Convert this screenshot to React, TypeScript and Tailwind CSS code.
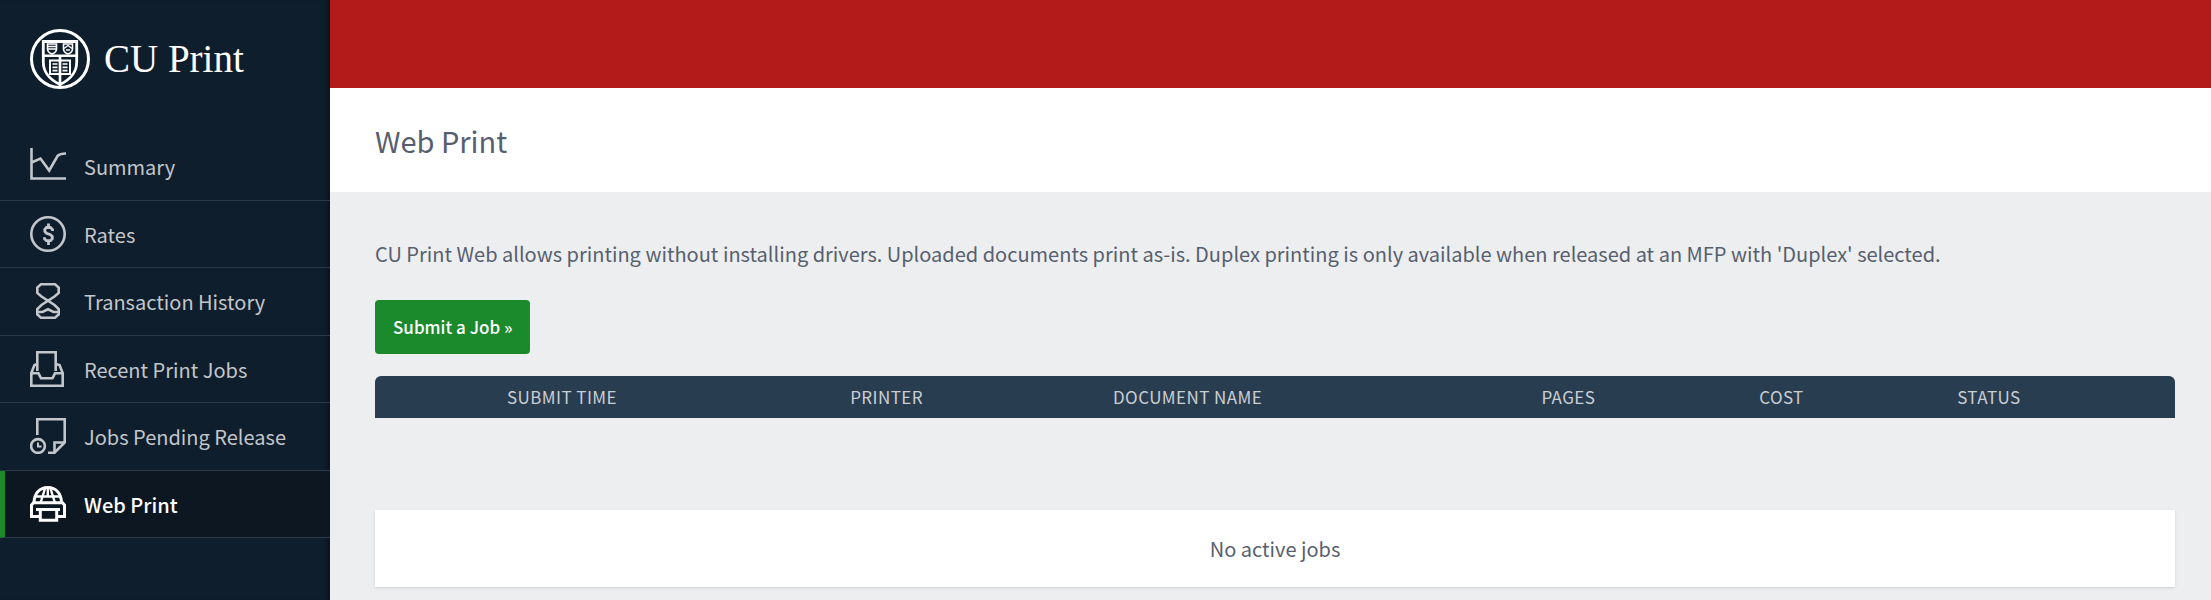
import React from 'react';

type NavItem = {
  label: string;
  icon: React.ReactNode;
  active?: boolean;
};

const Icon = ({ children }: { children: React.ReactNode }) => (
  <svg
    viewBox="0 0 36 36"
    className="w-9 h-9 shrink-0"
    fill="none"
    stroke="currentColor"
    strokeWidth="2.6"
    aria-hidden="true"
  >
    {children}
  </svg>
);

const navItems: NavItem[] = [
  {
    label: 'Summary',
    icon: (
      <Icon>
        <path d="M1.5 0V30.5H36M1.5 14.5L10.5 10.5L19.2 22.5L27.5 8Q30 5.5 36 5.5" />
      </Icon>
    ),
  },
  {
    label: 'Rates',
    icon: (
      <Icon>
        <circle cx="18" cy="18" r="16.7" />
        <path d="M22.5 15V13.5L20.5 11.5H16.5L14.8 13.3V15.5L16.5 17.3L20.5 18.8L22.3 20.5V22.7L20.5 24.7H16.3L14.5 22.8V21.3M18.5 7.5V12M18.5 24.5V29" strokeWidth="2.8" />
      </Icon>
    ),
  },
  {
    label: 'Transaction History',
    icon: (
      <Icon>
        <path d="M11 1.3H25L28.7 4.5V10L24.5 13.5L11.5 22L7.3 26V31.5L11 34.7H25L28.7 31.5V26L24.5 22L11.5 13.5L7.3 10V4.5Z" />
        <path d="M7.5 29H12.5L18 26.3L23.5 29H28.5" />
      </Icon>
    ),
  },
  {
    label: 'Recent Print Jobs',
    icon: (
      <Icon>
        <path d="M7.3 20V1.3H25.7V20" />
        <path d="M7.3 13L4.5 14L1.3 22V34.7H32.7V22L29.5 14L25.7 13" />
        <path d="M1.3 22.3H8.5L11 27.3H22.5L25 22.3H32.7" />
      </Icon>
    ),
  },
  {
    label: 'Jobs Pending Release',
    icon: (
      <Icon>
        <path d="M7.3 17V1.3H34.7V24.5L24.5 34.7H18" />
        <path d="M34.7 24.5H24.5V34.7" />
        <circle cx="8" cy="28" r="6.9" />
        <path d="M8 24.5V28.5H11.5" strokeWidth="2" />
      </Icon>
    ),
  },
  {
    label: 'Web Print',
    active: true,
    icon: (
      <Icon>
        <path d="M4 17C4 7.5 9.5 1.5 17.8 1.5S31.5 7.5 31.5 17" strokeWidth="3" />
        <path d="M17.8 1.5V10.5M5 10.5H30.5M15 2.5L10.5 17M20.5 2.5L25 17" strokeWidth="2.4" />
        <path d="M9 30.5H1.5V19L3.5 16.7H32.5L34.5 19V30.5H27" strokeWidth="3" />
        <path d="M6 23.5H30" strokeWidth="3" />
        <path d="M10.3 23.5V34.3H26.7V23.5" strokeWidth="3" />
      </Icon>
    ),
  },
];

const columns = [
  { label: 'Submit Time', className: 'w-[26.4%] pl-[132px]' },
  { label: 'Printer', className: 'w-[14.6%]' },
  { label: 'Document Name', className: 'w-[23.8%]' },
  { label: 'Pages', className: 'w-[12.1%]' },
  { label: 'Cost', className: 'w-[11%]' },
  { label: 'Status', className: 'w-[12.1%]' },
];

const Crest = () => (
  <svg viewBox="0 0 60 60" className="w-[60px] h-[60px] shrink-0" fill="none" stroke="white" aria-hidden="true">
    <circle cx="30" cy="30" r="28.5" strokeWidth="3" />
    <path d="M13.3 12.5H46.7V33C46.7 45 39 51 30 55.5C21 51 13.3 45 13.3 33Z" strokeWidth="2.8" />
    <path d="M13.3 26.8H46.7M30 26.8V57" strokeWidth="2.6" />
    {/* small shields */}
    <path d="M17.5 15H26.5V20C26.5 22.5 24.5 24 22 25C19.5 24 17.5 22.5 17.5 20Z" strokeWidth="1.6" />
    <path d="M18 17.5H26M18 20H26" strokeWidth="1.3" />
    <path d="M33.5 15H42.5V20C42.5 22.5 40.5 24 38 25C35.5 24 33.5 22.5 33.5 20Z" strokeWidth="1.6" />
    <path d="M34 19.5L38 16.5L42 19.5M36 21H40" strokeWidth="1.4" />
    {/* open book */}
    <path d="M20 31.5H28.5L30 32.5L31.5 31.5H40V45H31.5L30 46L28.5 45H20Z" strokeWidth="2" />
    <path d="M22.5 35H27.5M22.5 38.3H27.5M22.5 41.6H27.5M32.5 35H37.5M32.5 38.3H37.5M32.5 41.6H37.5" strokeWidth="1.7" />
  </svg>
);

const Sidebar = () => (
  <aside className="w-[330px] shrink-0 bg-[#0f1e2c] shadow-[inset_-6px_0_6px_-5px_rgba(0,0,0,0.6)]">
    <div className="flex items-center gap-3.5 h-[133px] pl-[30px] pb-4">
      <Crest />
      <span className="text-[39px] leading-none text-white font-['Liberation_Serif',serif]">CU Print</span>
    </div>
    <nav className="grid grid-rows-6 h-[405px]">
      {navItems.map((item) => (
        <a
          key={item.label}
          href="#"
          aria-current={item.active ? 'page' : undefined}
          className={
            item.active
              ? 'flex items-center gap-[18px] pl-[25px] border-l-5 border-l-[#1b8a2c] border-b border-b-[#2a3947] bg-[#0c1721] text-white font-medium'
              : 'flex items-center gap-[18px] pl-[30px] border-b border-[#2a3947] text-[#c3c6ca]'
          }
        >
          {item.icon}
          <span className="pt-0.5">{item.label}</span>
        </a>
      ))}
    </nav>
  </aside>
);

const App = () => {
  return (
    <div className="flex min-h-screen bg-[#edeef0] text-[20px] leading-7 text-[#575f6e] font-['Noto_Sans_CJK_SC',sans-serif]">
      <Sidebar />
      <div className="flex-1 min-w-0">
        <div className="h-[88px] bg-[#b31b1b]" />
        <header className="flex items-center h-[104px] px-[45px] bg-white">
          <h1 className="text-[29px] leading-9">Web Print</h1>
        </header>
        <main className="pl-[45px] pr-9 pt-12">
          <p>
            CU Print Web allows printing without installing drivers. Uploaded documents print as-is. Duplex printing is
            only available when released at an MFP with 'Duplex' selected.
          </p>
          <button
            type="button"
            className="block mt-8 h-[54px] px-[18px] rounded bg-[#1b8a2c] text-white text-[17px] font-medium"
          >
            Submit a Job »
          </button>
          <table className="mt-[22px] w-full table-fixed border-separate border-spacing-0 text-left">
            <thead className="text-[#c9ced3] text-[17px] uppercase">
              <tr>
                {columns.map((col) => (
                  <th
                    key={col.label}
                    scope="col"
                    className={`h-[42px] p-0 font-normal tracking-wide bg-[#293d51] first:rounded-tl-md last:rounded-tr-md ${col.className}`}
                  >
                    {col.label}
                  </th>
                ))}
              </tr>
            </thead>
          </table>
          <p className="flex items-center justify-center mt-[92px] h-[77px] bg-white shadow-sm">No active jobs</p>
        </main>
      </div>
    </div>
  );
};

export default App;
